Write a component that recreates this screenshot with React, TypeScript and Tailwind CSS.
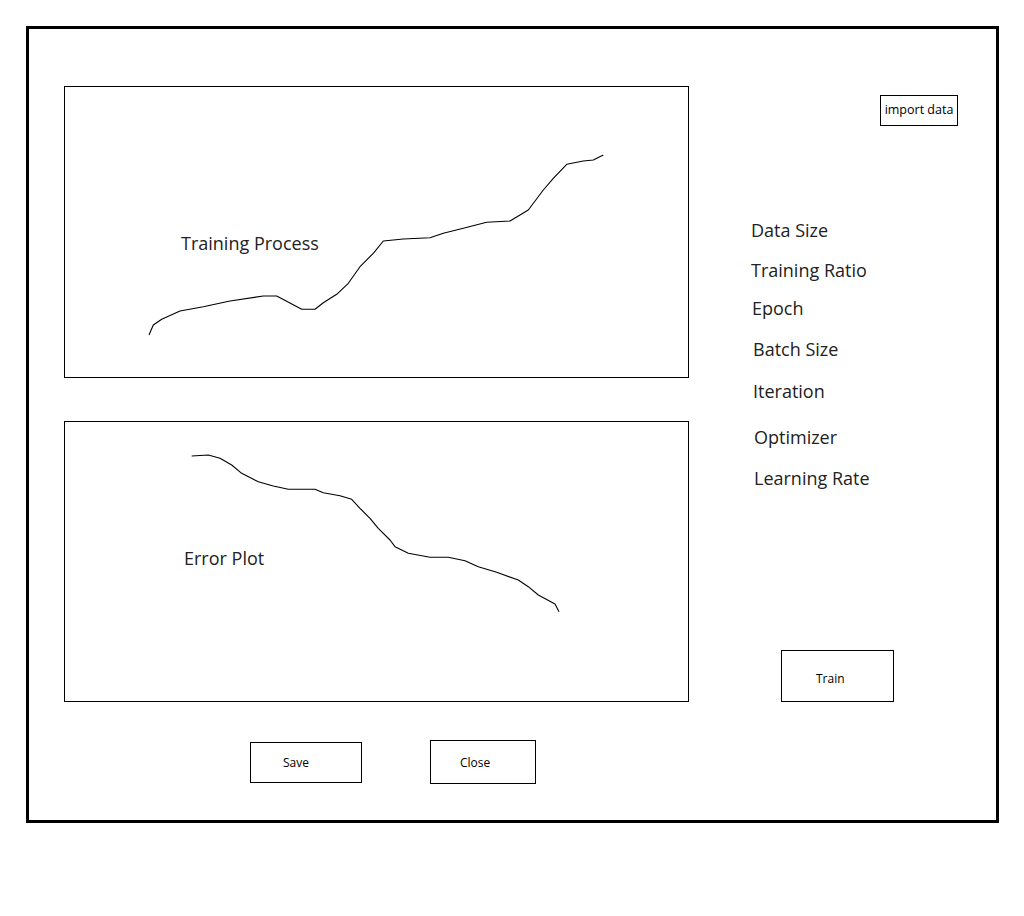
import React from "react";

const TRAIN_CURVE = [
  [149, 335], [153.3, 325], [161.7, 319.3], [180, 311], [203.3, 306.7], [230, 301],
  [263.3, 296], [276.7, 296], [301.7, 309.3], [315, 309.3], [323.3, 302.7], [336.7, 294.3],
  [348.3, 283.3], [360, 266.7], [373.3, 253.3], [383.3, 241], [403.3, 239], [430, 237.7],
  [443.3, 233.3], [463.3, 228.3], [486.7, 222.3], [510, 221], [528.3, 210], [543.3, 190],
  [553.3, 178.3], [566.7, 164.3], [583.3, 161], [593.3, 160], [603.3, 155],
];

const ERROR_CURVE = [
  [191.7, 456], [208.3, 455], [220, 458.3], [231.7, 465], [241.7, 473.3], [258.3, 481.7],
  [273.3, 486], [288.3, 489.3], [315, 489.3], [323.3, 492.7], [340, 495.7], [351.7, 499.3],
  [360, 508.3], [370, 518.3], [378.3, 528.3], [390, 540], [395, 546.7], [408.3, 553.3],
  [430, 557.3], [448.3, 557.3], [465, 560.7], [478.3, 566.7], [496.7, 572.3], [518.3, 580],
  [528.3, 586.7], [538.3, 595], [555, 604], [559, 611.7],
];

const PARAMS = [
  { label: "Data Size", cls: "mt-[92px] ml-[62px]" },
  { label: "Training Ratio", cls: "mt-[16px] ml-[62px]" },
  { label: "Epoch", cls: "mt-[14px] ml-[63px]" },
  { label: "Batch Size", cls: "mt-[17px] ml-[64px]" },
  { label: "Iteration", cls: "mt-[18px] ml-[64px]" },
  { label: "Optimizer", cls: "mt-[22px] ml-[65px]" },
  { label: "Learning Rate", cls: "mt-[17px] ml-[65px]" },
];

// curve points are page coords; shift by the plot box's inner origin
function Curve({ points, ox, oy }: { points: number[][]; ox: number; oy: number }) {
  const d = points.map(([x, y]) => `${(x - ox).toFixed(1)},${(y - oy).toFixed(1)}`).join(" ");
  return (
    <svg className="absolute inset-0 h-full w-full" aria-hidden>
      <polyline points={d} fill="none" stroke="#000" strokeWidth={1.1} strokeLinejoin="round" />
    </svg>
  );
}

function PlotBox({
  title,
  points,
  oy,
  height,
  titleCls,
}: {
  title: string;
  points: number[][];
  oy: number;
  height: string;
  titleCls: string;
}) {
  return (
    <div className={`relative w-[625px] border border-black ${height}`}>
      <Curve points={points} ox={65} oy={oy} />
      <p className={`text-[18px] leading-[24px] text-[#222] ${titleCls}`}>{title}</p>
    </div>
  );
}

export default function App() {
  return (
    <div className="min-h-[916px] bg-white pl-[26px] pt-[26px] font-['Open_Sans',sans-serif] text-black">
      <div className="flex h-[797px] w-[973px] flex-col border-[3px] border-black">
        <div className="flex">
          {/* plots */}
          <div className="ml-[35px] mt-[57px] flex flex-col gap-[43px]">
            <PlotBox
              title="Training Process"
              points={TRAIN_CURVE}
              oy={87}
              height="h-[292px]"
              titleCls="pl-[116px] pt-[144px]"
            />
            <PlotBox
              title="Error Plot"
              points={ERROR_CURVE}
              oy={422}
              height="h-[281px]"
              titleCls="pl-[119px] pt-[124px]"
            />
          </div>

          {/* controls */}
          <div className="flex flex-col items-start">
            <button className="ml-[191px] mt-[66px] flex h-[31px] w-[78px] items-center justify-center border border-black text-[12.5px] leading-none">
              import data
            </button>
            {PARAMS.map((p) => (
              <span key={p.label} className={`text-[18px] leading-[24px] text-[#222] ${p.cls}`}>
                {p.label}
              </span>
            ))}
            <button className="ml-[92px] mt-[160px] flex h-[52px] w-[113px] items-center border border-black pl-[34px] pt-[5px] text-[12px] leading-none">
              Train
            </button>
          </div>
        </div>

        {/* bottom actions */}
        <div className="ml-[221px] mt-[38px] flex items-center">
          <button className="flex h-[41px] w-[112px] items-center border border-black pl-[32px] pt-[2px] text-[12px] leading-none">
            Save
          </button>
          <button className="ml-[68px] flex h-[44px] w-[106px] items-center border border-black pl-[29px] pt-[2px] text-[12px] leading-none">
            Close
          </button>
        </div>
      </div>
    </div>
  );
}
